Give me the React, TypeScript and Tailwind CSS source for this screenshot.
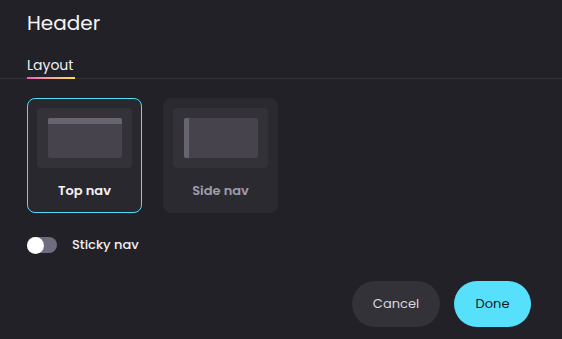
import React, { useState } from 'react';

function LayoutCard({
  label,
  selected,
  variant,
  onClick,
}: {
  label: string;
  selected: boolean;
  variant: 'top' | 'side';
  onClick: () => void;
}) {
  return (
    <button
      onClick={onClick}
      className={`flex h-[115px] w-[115px] flex-col items-center rounded-lg border pt-[9px] ${
        selected ? 'border-[#52dcf5] bg-[#29282f]' : 'border-[#2b2a31] bg-[#2b2a31]'
      }`}
    >
      <div className="flex h-[60px] w-[95px] items-center justify-center rounded-[4px] bg-[#333238]">
        <div className={`flex h-[40px] w-[74px] overflow-hidden rounded-[2px] bg-[#46434d] ${variant === 'top' ? 'flex-col' : 'flex-row'}`}>
          {variant === 'top' ? (
            <div className="h-[6px] w-full bg-[#67646f]" />
          ) : (
            <div className="h-full w-[5px] bg-[#67646f]" />
          )}
        </div>
      </div>
      <span
        className={`mt-[14px] text-[13px] font-semibold leading-[18px] ${
          selected ? 'text-[#f4f3f6]' : 'text-[#9f9caa]'
        }`}
      >
        {label}
      </span>
    </button>
  );
}

export default function App() {
  const [layout, setLayout] = useState<'top' | 'side'>('top');
  const [sticky, setSticky] = useState(false);

  return (
    <div
      className="flex h-[339px] w-[562px] flex-col overflow-hidden bg-[#222127] text-white"
      style={{ fontFamily: 'Poppins, Inter, "Noto Sans", sans-serif' }}
    >
      <h1 className="px-[27px] pt-[9px] text-[20px] font-normal leading-[28px] text-[#f4f3f6]">Header</h1>

      <div className="mt-[18px] flex border-b border-[#34333a] px-[26px]">
        <div className="relative px-px pb-[3px] text-[14px] leading-[20px] text-[#eeedf1]">
          Layout
          <div className="absolute -bottom-px left-px h-[2px] w-[48px] bg-gradient-to-r from-[#ee5bbd] to-[#fbe23b]" />
        </div>
      </div>

      <div className="mt-[19px] flex gap-[21px] px-[27px]">
        <LayoutCard label="Top nav" variant="top" selected={layout === 'top'} onClick={() => setLayout('top')} />
        <LayoutCard label="Side nav" variant="side" selected={layout === 'side'} onClick={() => setLayout('side')} />
      </div>

      <div className="mt-[23px] flex items-center gap-[15px] px-[27px]">
        <button
          onClick={() => setSticky(!sticky)}
          className={`flex h-[16px] w-[30px] items-center rounded-full ${sticky ? 'justify-end bg-[#4fd8f2]' : 'justify-start bg-[#6f6c80]'}`}
        >
          <span className="h-[17px] w-[17px] rounded-full bg-white" />
        </button>
        <span className="text-[13px] font-medium leading-[18px] text-[#eeedf1]">Sticky nav</span>
      </div>

      <div className="mt-auto flex justify-end gap-[14px] pb-[12px] pr-[31px]">
        <button className="h-[46px] w-[88px] rounded-full bg-[#333238] text-[13px] text-[#d9d7de]">Cancel</button>
        <button className="h-[46px] w-[77px] rounded-full bg-[#56e0fb] text-[13px] text-[#1b1a20]">Done</button>
      </div>
    </div>
  );
}
